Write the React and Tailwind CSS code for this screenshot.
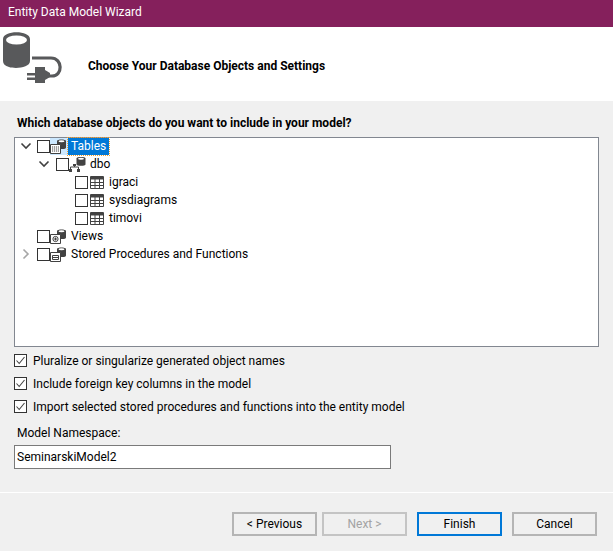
const font = { fontFamily: 'Roboto, "Noto Sans", sans-serif' };

function Chevron({ open }) {
  return (
    <svg width="12" height="12" viewBox="0 0 12 12" className="shrink-0">
      {open ? (
        <path d="M1.5 3.5 L6 8 L10.5 3.5" fill="none" stroke="#404040" strokeWidth="1.6" />
      ) : (
        <path d="M3.5 1.5 L8 6 L3.5 10.5" fill="none" stroke="#a6a6a6" strokeWidth="1.6" />
      )}
    </svg>
  );
}

function Box() {
  return <span className="block w-[13px] h-[13px] shrink-0 bg-white border border-[#333333]" />;
}

function TableIcon() {
  return (
    <svg width="14" height="13" viewBox="0 0 14 13" className="shrink-0">
      <path d="M0.5 0.5 H13.5 V12.5 H0.5 Z" fill="#fff" stroke="#424242" />
      <path d="M0.5 1 H13.5 V3.5 H0.5 Z" fill="#424242" />
      <path d="M0 6.5 H14 M0 9.5 H14 M5 3 V12 M9.5 3 V12" stroke="#424242" strokeWidth="1" />
    </svg>
  );
}

// small db cylinder behind a white box, the inner mark differs per folder
function FolderDbIcon({ kind }) {
  return (
    <svg width="16" height="16" viewBox="0 0 16 16" className="shrink-0">
      <path d="M7 3 C7 1 16 1 16 3 V9.5 C16 10.5 14 11 13 11 H7 Z" fill="#424242" />
      <ellipse cx="11.5" cy="3.2" rx="3" ry="1" fill="#fff" />
      <path d="M0.5 6.5 H10.5 V15.5 H0.5 Z" fill="#fff" stroke="#424242" />
      {kind === 'table' && (
        <path d="M2 9 H9 M2 11 H9 M2 13 H9" stroke="#424242" strokeWidth="1" strokeDasharray="1.2 0.8" />
      )}
      {kind === 'view' && (
        <g>
          <circle cx="5.5" cy="11" r="2.6" fill="none" stroke="#424242" />
          <path d="M5.5 9.5 V12.5 M4 11 H7" stroke="#424242" />
        </g>
      )}
      {kind === 'proc' && (
        <path d="M2.5 9.5 H8.5 V13.5 H2.5 Z M2.5 11.5 H8.5" fill="none" stroke="#424242" />
      )}
    </svg>
  );
}

function SchemaIcon() {
  return (
    <svg width="17" height="16" viewBox="0 0 17 16" className="shrink-0">
      <path d="M7.5 2.5 C7.5 0.6 16.5 0.6 16.5 2.5 V8.5 C16.5 10.3 7.5 10.3 7.5 8.5 Z" fill="#424242" />
      <ellipse cx="12" cy="2.8" rx="3" ry="1" fill="#fff" />
      <path d="M5.5 8 V11 M1.5 14 V11 H9.5 V14" fill="none" stroke="#424242" />
      <path d="M0 13 H3 V16 H0 Z M4 8 H7 V10 H4 Z M8 13 H11 V16 H8 Z" fill="#424242" />
    </svg>
  );
}

function Row({ indent, chevron, children }) {
  return (
    <div className="flex items-center h-[18px]">
      <span className={`${indent} shrink-0`} />
      <span className="w-[18px] shrink-0 flex justify-center">{chevron}</span>
      {children}
    </div>
  );
}

function Check({ label }) {
  return (
    <label className="flex items-center gap-[6px] h-[23px]">
      <span className="w-[13px] h-[13px] bg-white border border-[#333333] flex items-center justify-center shrink-0">
        <svg width="11" height="11" viewBox="0 0 11 11">
          <path d="M1.5 5.5 L4.2 8.5 L9.5 2" fill="none" stroke="#444444" strokeWidth="1.1" />
        </svg>
      </span>
      <span>{label}</span>
    </label>
  );
}

function Btn({ children, className }) {
  return (
    <button className={`w-[85px] h-[24px] flex items-center justify-center bg-[#f0f0f0] ${className}`}>
      {children}
    </button>
  );
}

export default function App() {
  return (
    <div className="w-[613px] h-[551px] bg-[#f0f0f0] text-[12px] text-black overflow-hidden flex flex-col" style={font}>
      {/* title bar */}
      <div className="h-[27px] bg-[#85205c] text-white flex items-center pl-[8px] pb-[3px] shrink-0">
        Entity Data Model Wizard
      </div>

      {/* header */}
      <div className="h-[74px] bg-white flex items-center shrink-0">
        <svg width="62" height="60" viewBox="0 0 62 60" className="ml-[3px] mb-[8px] shrink-0">
          <path d="M0 9 C0 0 27 0 27 9 V31 C27 38 12 39 6 37 C2 36 0 34 0 31 Z" fill="#58595b" />
          <ellipse cx="13.5" cy="10" rx="10.5" ry="4.5" fill="#fff" />
          <path d="M29 28 H48 C60 28 60 46 49 46 H44" fill="none" stroke="#58595b" strokeWidth="3.2" />
          <path d="M32 37 H42 V53 H32 Z" fill="#58595b" />
          <path d="M42 40 L47 43 V47 L42 50 Z" fill="#58595b" />
          <path d="M24 43 H32 V45.5 H24 Z M24 47.5 H32 V50 H24 Z" fill="#58595b" />
        </svg>
        <div className="ml-[23px] pt-[3px] font-bold">Choose Your Database Objects and Settings</div>
      </div>

      {/* body */}
      <div className="px-[14px] flex flex-col">
        <div className="mt-[13px] ml-[3px] h-[18px] flex items-center font-bold leading-none">
          Which database objects do you want to include in your model?
        </div>

        <div className="mt-[5px] h-[210px] bg-white border border-[#828790] leading-[16px]">
          <div className="-mt-[1px]">
            <Row indent="w-[2px]" chevron={<Chevron open />}>
              <span className="ml-[2px]"><Box /></span>
              <span className="bg-[#cce8ff] flex items-center h-[17px] pr-[2px]"><FolderDbIcon kind="table" /></span>
              <span className="bg-[#0078d7] text-white px-[3px] h-[17px] flex items-center outline-1 outline-dotted outline-[#f0a030]">Tables</span>
            </Row>
            <Row indent="w-[20px]" chevron={<Chevron open />}>
              <span className="ml-[3px]"><Box /></span>
              <SchemaIcon />
              <span className="ml-[4px]">dbo</span>
            </Row>
            <Row indent="w-[42px]" chevron={null}>
              <Box />
              <span className="ml-[2px]"><TableIcon /></span>
              <span className="ml-[5px]">igraci</span>
            </Row>
            <Row indent="w-[42px]" chevron={null}>
              <Box />
              <span className="ml-[2px]"><TableIcon /></span>
              <span className="ml-[5px]">sysdiagrams</span>
            </Row>
            <Row indent="w-[42px]" chevron={null}>
              <Box />
              <span className="ml-[2px]"><TableIcon /></span>
              <span className="ml-[5px]">timovi</span>
            </Row>
            <Row indent="w-[2px]" chevron={null}>
              <span className="ml-[2px]"><Box /></span>
              <FolderDbIcon kind="view" />
              <span className="ml-[5px]">Views</span>
            </Row>
            <Row indent="w-[2px]" chevron={<Chevron />}>
              <span className="ml-[2px]"><Box /></span>
              <FolderDbIcon kind="proc" />
              <span className="ml-[5px]">Stored Procedures and Functions</span>
            </Row>
          </div>
        </div>

        <div className="mt-[2px] flex flex-col">
          <Check label="Pluralize or singularize generated object names" />
          <Check label="Include foreign key columns in the model" />
          <Check label="Import selected stored procedures and functions into the entity model" />
        </div>

        <div className="mt-[6px] ml-[3px] h-[18px] flex items-center">Model Namespace:</div>
        <input
          readOnly
          value="SeminarskiModel2"
          className="mt-[3px] w-[377px] h-[24px] bg-white border border-[#7a7a7a] px-[2px] outline-none"
        />
      </div>

      <div className="mt-[23px] h-[1px] bg-white shrink-0" />

      {/* footer */}
      <div className="mt-[19px] pr-[16px] flex justify-end">
        <Btn className="border-2 border-[#b5b5b5]">&lt; Previous</Btn>
        <Btn className="ml-[5px] border-2 border-[#c4c4c4] text-[#a3a3a3]">Next &gt;</Btn>
        <Btn className="ml-[10px] border-2 border-[#0078d7]">Finish</Btn>
        <Btn className="ml-[10px] border-2 border-[#b5b5b5]">Cancel</Btn>
      </div>
    </div>
  );
}
